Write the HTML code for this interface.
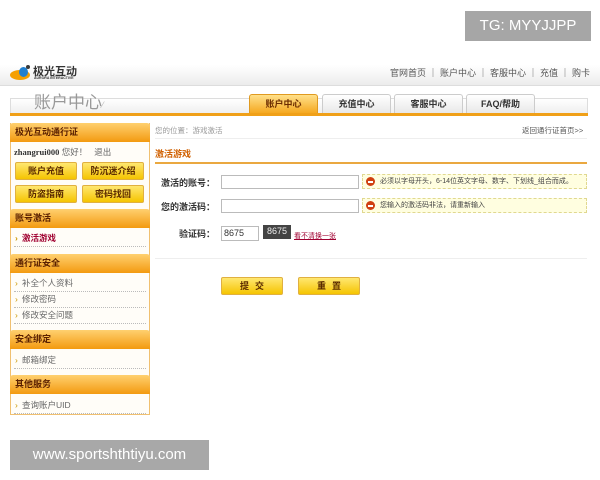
<!DOCTYPE html>
<html><head><meta charset="utf-8"><style>
*{margin:0;padding:0;box-sizing:border-box}
body{width:600px;height:480px;background:#fff;position:relative;overflow:hidden;font-family:"Liberation Sans","Noto Sans CJK SC",sans-serif;font-size:9px;color:#333}
.a{position:absolute}
.tg{left:465px;top:11px;width:126px;height:30px;background:#a6a6a6;color:#fff;font-size:15px;line-height:30px;text-align:center}
.wm{left:10px;top:440px;width:199px;height:30px;background:#a8a8a8;color:#fff;font-size:15px;line-height:30px;text-align:center}
.top{left:0;top:65px;width:600px;height:21px;background:linear-gradient(#fff,#ececec);border-bottom:1px solid #ddd}
.links{right:10px;top:66px;font-size:9px;color:#555;line-height:14px}
.hbox{left:10px;top:98px;width:578px;height:17px;background:linear-gradient(#fff,#eee);border:1px solid #ddd}
.oline{left:10px;top:113px;width:578px;height:3px;background:#f0a018}
.tab{top:94px;height:19px;width:69px;border:1px solid #ccc;border-bottom:none;border-radius:3px 3px 0 0;background:linear-gradient(#fff,#e8e8e8);text-align:center;line-height:19px;font-weight:bold;font-size:9px;color:#333}
.tab.on{background:linear-gradient(#ffe08a,#f5a820);border-color:#e09a20;color:#6b2b00}
.side{left:10px;top:123px;width:140px;height:292px;border:1px solid #f0c070;border-top:none;background:#fffdf8}
.sh{left:10px;width:140px;height:19px;background:linear-gradient(#ffd070,#f39a10);color:#5a2000;font-weight:bold;font-size:9px;line-height:19px;padding-left:5px;border-radius:3px 3px 0 0}
.btn{width:62px;height:18px;background:linear-gradient(#ffe770,#f5c400);border:1px solid #e0b040;border-radius:2px;text-align:center;line-height:16px;font-weight:bold;font-size:9px;color:#5a2a00}
.it{left:14px;width:132px;height:16px;line-height:15px;border-bottom:1px dotted #bbb;color:#666;font-size:8.5px;padding-left:8px}
.it:before{content:"›";position:absolute;left:1px;color:#c90}
.lab{width:60px;text-align:right;font-weight:bold;font-size:9px;color:#333}
.inp{height:14px;border:1px solid #bbb;background:#fff}
.tip{left:362px;width:225px;height:15px;border:1px dashed #e0d890;background:#fffee0;font-size:7px;color:#444;line-height:13px;padding-left:17px}
.tip i{position:absolute;left:3px;top:2px;width:9px;height:9px;border-radius:50%;background:#d04010}
.tip i:after{content:"";position:absolute;left:2px;top:4px;width:5px;height:1.5px;background:#fff}
.sb{top:277px;width:62px;height:18px;background:linear-gradient(#ffe770,#f5c400);border:1px solid #e0b040;border-radius:2px;text-align:center;line-height:16px;font-weight:bold;color:#5a2a00;letter-spacing:6px;padding-left:6px}
</style></head><body>
<div class="a tg">TG: MYYJJPP</div>
<div class="a top"></div>
<div class="a" style="left:10px;top:70px;width:20px;height:10px;border-radius:50%;background:#f5a000"></div>
<div class="a" style="left:19px;top:67px;width:9px;height:10px;border-radius:50%;background:#2080d0"></div>
<div class="a" style="left:26px;top:65px;width:4px;height:4px;border-radius:50%;background:#3a3a3a"></div>
<div class="a" style="left:33px;top:63px;font-size:11px;font-weight:bold;color:#333">极光互动</div>
<div class="a" style="left:34px;top:76px;font-size:3.5px;font-weight:bold;color:#333">AURORA INTERACTIVE</div>
<div class="a links">官网首页 ｜ 账户中心 ｜ 客服中心 ｜ 充值 ｜ 购卡</div>
<div class="a hbox"></div>
<div class="a" style="left:34px;top:88px;font-size:17px;color:#999">账户中心<span style="font-size:9px;color:#bbb">⁄</span></div>
<div class="a oline"></div>
<div class="a tab on" style="left:249px">账户中心</div>
<div class="a tab" style="left:322px">充值中心</div>
<div class="a tab" style="left:394px">客服中心</div>
<div class="a tab" style="left:466px">FAQ/帮助</div>

<div class="a side"></div>
<div class="a sh" style="top:123px">极光互动通行证</div>
<div class="a" style="left:14px;top:146px;font-size:8.5px"><b style="font-family:'Liberation Serif',serif">zhangrui000</b> <span style="color:#666">您好！ &nbsp;&nbsp;退出</span></div>
<div class="a btn" style="left:15px;top:162px">账户充值</div>
<div class="a btn" style="left:82px;top:162px">防沉迷介绍</div>
<div class="a btn" style="left:15px;top:185px">防盗指南</div>
<div class="a btn" style="left:82px;top:185px">密码找回</div>
<div class="a sh" style="top:209px">账号激活</div>
<div class="a it" style="top:231px;color:#a00030;font-weight:bold">激活游戏</div>
<div class="a sh" style="top:254px">通行证安全</div>
<div class="a it" style="top:276px">补全个人资料</div>
<div class="a it" style="top:292px">修改密码</div>
<div class="a it" style="top:308px">修改安全问题</div>
<div class="a sh" style="top:330px">安全绑定</div>
<div class="a it" style="top:353px">邮箱绑定</div>
<div class="a sh" style="top:375px">其他服务</div>
<div class="a it" style="top:398px">查询账户UID</div>

<div class="a" style="left:155px;top:125px;font-size:7.5px;color:#999">您的位置：游戏激活</div>
<div class="a" style="left:522px;top:125px;font-size:7.5px;color:#555">返回通行证首页&gt;&gt;</div>
<div class="a" style="left:155px;top:138px;width:432px;height:1px;background:#eee"></div>
<div class="a" style="left:155px;top:147px;font-size:9px;font-weight:bold;color:#d06000">激活游戏</div>
<div class="a" style="left:155px;top:162px;width:432px;height:2px;background:#eaa840"></div>

<div class="a lab" style="left:155px;top:176px">激活的账号：</div>
<div class="a inp" style="left:221px;top:175px;width:138px"></div>
<div class="a tip" style="top:174px"><i></i>必须以字母开头，6-14位英文字母、数字、下划线_组合而成。</div>
<div class="a lab" style="left:155px;top:200px">您的激活码：</div>
<div class="a inp" style="left:221px;top:199px;width:138px"></div>
<div class="a tip" style="top:198px"><i></i>您输入的激活码非法，请重新输入</div>
<div class="a lab" style="left:155px;top:227px">验证码：</div>
<div class="a inp" style="left:221px;top:226px;width:38px;height:15px;font-size:9px;line-height:13px;padding-left:2px">8675</div>
<div class="a" style="left:263px;top:225px;width:28px;height:14px;background:#444;color:#eee;font-size:9px;line-height:13px;text-align:center">8675</div>
<div class="a" style="left:294px;top:231px;font-size:7px;color:#a00030;text-decoration:underline">看不清换一张</div>
<div class="a" style="left:155px;top:258px;width:432px;height:1px;background:#eee"></div>
<div class="a sb" style="left:221px">提交</div>
<div class="a sb" style="left:298px">重置</div>

<div class="a wm">www.sportshthtiyu.com</div>
</body></html>
